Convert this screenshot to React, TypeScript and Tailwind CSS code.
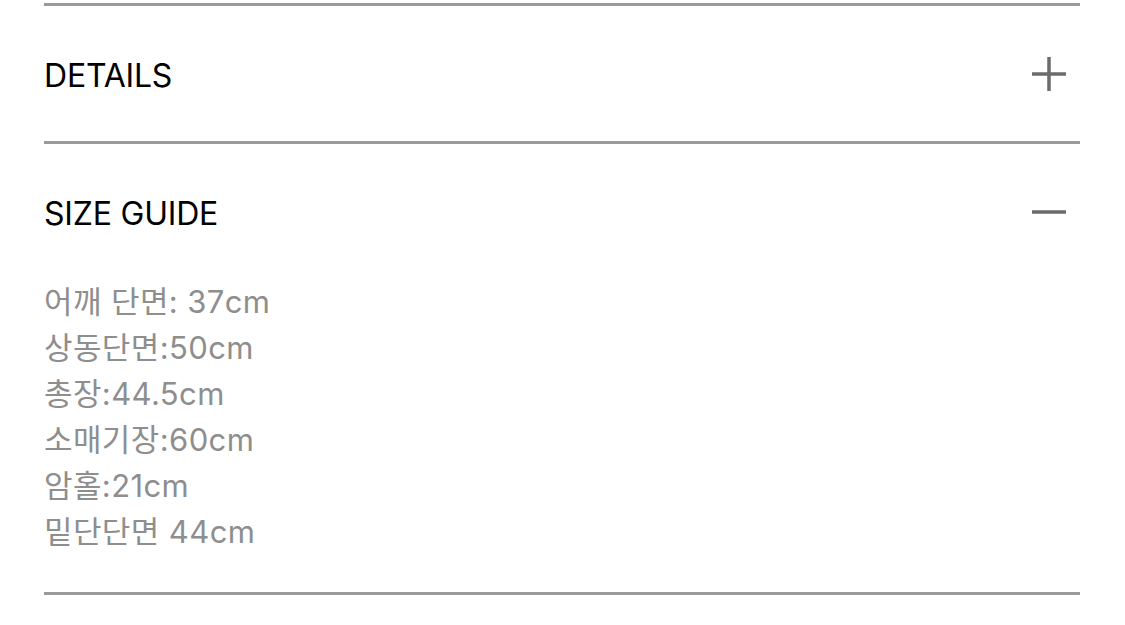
import { FC, useState } from "react";

const sizeGuide = [
  "어깨 단면: 37cm",
  "상동단면:50cm",
  "총장:44.5cm",
  "소매기장:60cm",
  "암홀:21cm",
  "밑단단면 44cm",
];

const PlusIcon = () => (
  <svg width="36" height="36" viewBox="0 0 36 36" fill="none">
    <path d="M18 1v34M1 18h34" stroke="#6b6b6b" strokeWidth="3.5" />
  </svg>
);

const MinusIcon = () => (
  <svg width="36" height="36" viewBox="0 0 36 36" fill="none">
    <path d="M1 18h34" stroke="#6b6b6b" strokeWidth="3.5" />
  </svg>
);

interface SectionProps {
  title: string;
  open: boolean;
  onToggle: () => void;
  children?: React.ReactNode;
}

const Section: FC<SectionProps> = ({ title, open, onToggle, children }) => {
  return (
    <div className="border-b-[3px] border-[#9a9a9a]">
      <button
        onClick={onToggle}
        className="flex h-[135px] w-full items-center justify-between pr-[13px] text-left"
      >
        <span className="pt-[4px] text-[32px] tracking-[-0.2px] text-black">
          {title}
        </span>
        {open ? <MinusIcon /> : <PlusIcon />}
      </button>
      {open && <div className="pb-[37px]">{children}</div>}
    </div>
  );
};

const App: FC = () => {
  const [openDetails, setOpenDetails] = useState(false);
  const [openSize, setOpenSize] = useState(true);

  return (
    <div
      className="min-h-[625px] bg-white px-[44px] pt-[3px]"
      style={{ fontFamily: 'Inter, "Noto Sans CJK KR", sans-serif' }}
    >
      <div className="w-[1036px] border-t-[3px] border-[#9a9a9a]">
        <Section
          title="DETAILS"
          open={openDetails}
          onToggle={() => setOpenDetails(!openDetails)}
        >
          <p className="text-[31px] text-[#8e8e8e]">-</p>
        </Section>
        <Section
          title="SIZE GUIDE"
          open={openSize}
          onToggle={() => setOpenSize(!openSize)}
        >
          <ul className="flex flex-col text-[31px] leading-[46px] tracking-[0.4px] text-[#8e8e8e]">
            {sizeGuide.map((line) => (
              <li key={line}>{line}</li>
            ))}
          </ul>
        </Section>
      </div>
    </div>
  );
};

export default App;
